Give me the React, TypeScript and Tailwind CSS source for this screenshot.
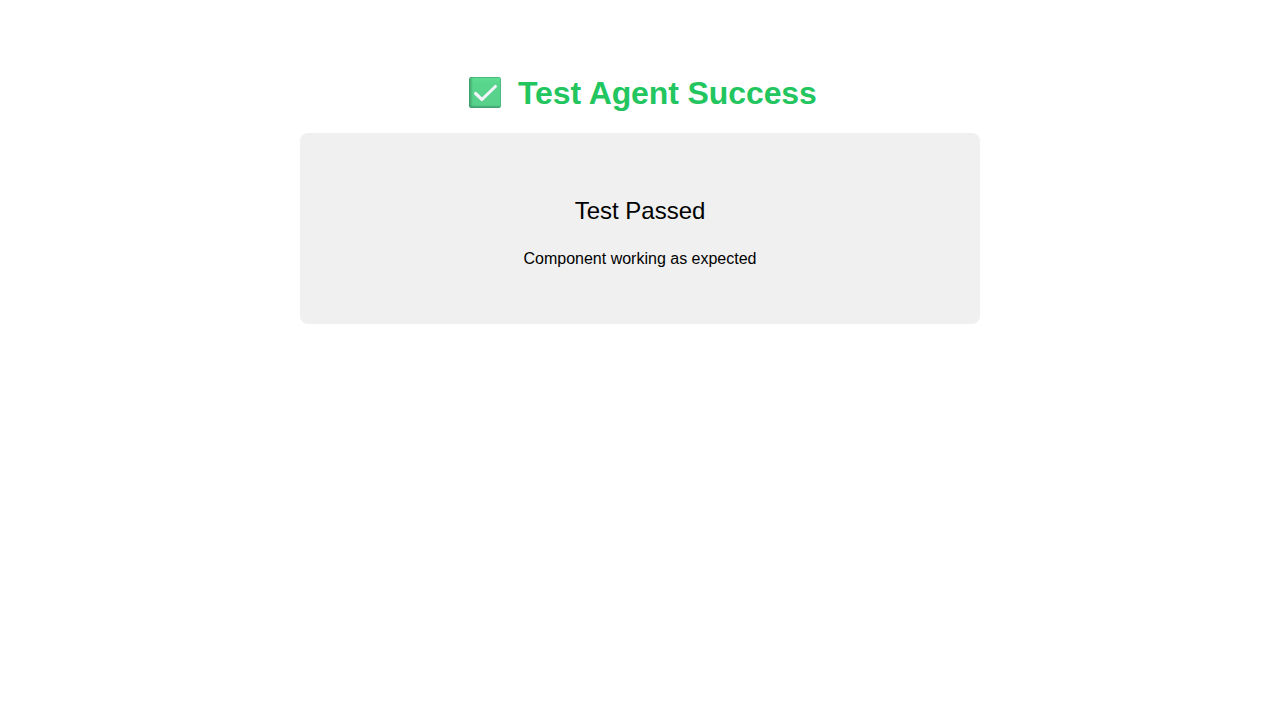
export default function App() {
  return (
    <main className="mx-auto w-[680px] pt-[75px] text-center font-['Liberation_Sans',Arial,sans-serif] text-black">
      <h1 className="flex h-[37px] items-center pl-[168px] text-[32px] leading-[37px] font-bold tracking-[-0.1px] text-[#22c55e]">
        <svg className="mr-4 -mt-px h-8 w-[34px] shrink-0" viewBox="0 0 34 32" fill="none">
          <defs>
            <linearGradient id="face" x1="0" y1="0" x2="0" y2="1">
              <stop offset="0" stopColor="#5fe096" />
              <stop offset="0.2" stopColor="#57d68c" />
              <stop offset="1" stopColor="#59d08b" />
            </linearGradient>
            <linearGradient id="side" x1="0" y1="0" x2="1" y2="0">
              <stop offset="0" stopColor="#3d9b68" />
              <stop offset="1" stopColor="#3d9b68" stopOpacity="0" />
            </linearGradient>
            <linearGradient id="bottom" x1="0" y1="1" x2="0" y2="0">
              <stop offset="0" stopColor="#3b9768" />
              <stop offset="1" stopColor="#3b9768" stopOpacity="0" />
            </linearGradient>
            <clipPath id="box">
              <rect x="1" y="0" width="32" height="31" rx="3" />
            </clipPath>
          </defs>
          <g clipPath="url(#box)">
            <rect x="1" width="32" height="31" fill="url(#face)" />
            <rect x="1" width="32" height="1" fill="#4ab77c" />
            <rect x="1" width="4" height="31" fill="url(#side)" />
            <rect x="1" y="28" width="32" height="3" fill="url(#bottom)" />
            <rect x="32" width="1" height="31" fill="#4dbb80" />
          </g>
          <path d="M7.6 16.5l6.4 6L27.4 9.5" stroke="#f5f3fa" strokeWidth="3.1" strokeLinecap="round" strokeLinejoin="round" />
        </svg>
        Test Agent Success
      </h1>
      <section className="mt-[21px] h-[191px] rounded-lg bg-[#f0f0f0] pt-16">
        <p className="text-2xl leading-[27px]">Test Passed</p>
        <p className="mt-[26px] text-base leading-[18px]">Component working as expected</p>
      </section>
    </main>
  );
}
